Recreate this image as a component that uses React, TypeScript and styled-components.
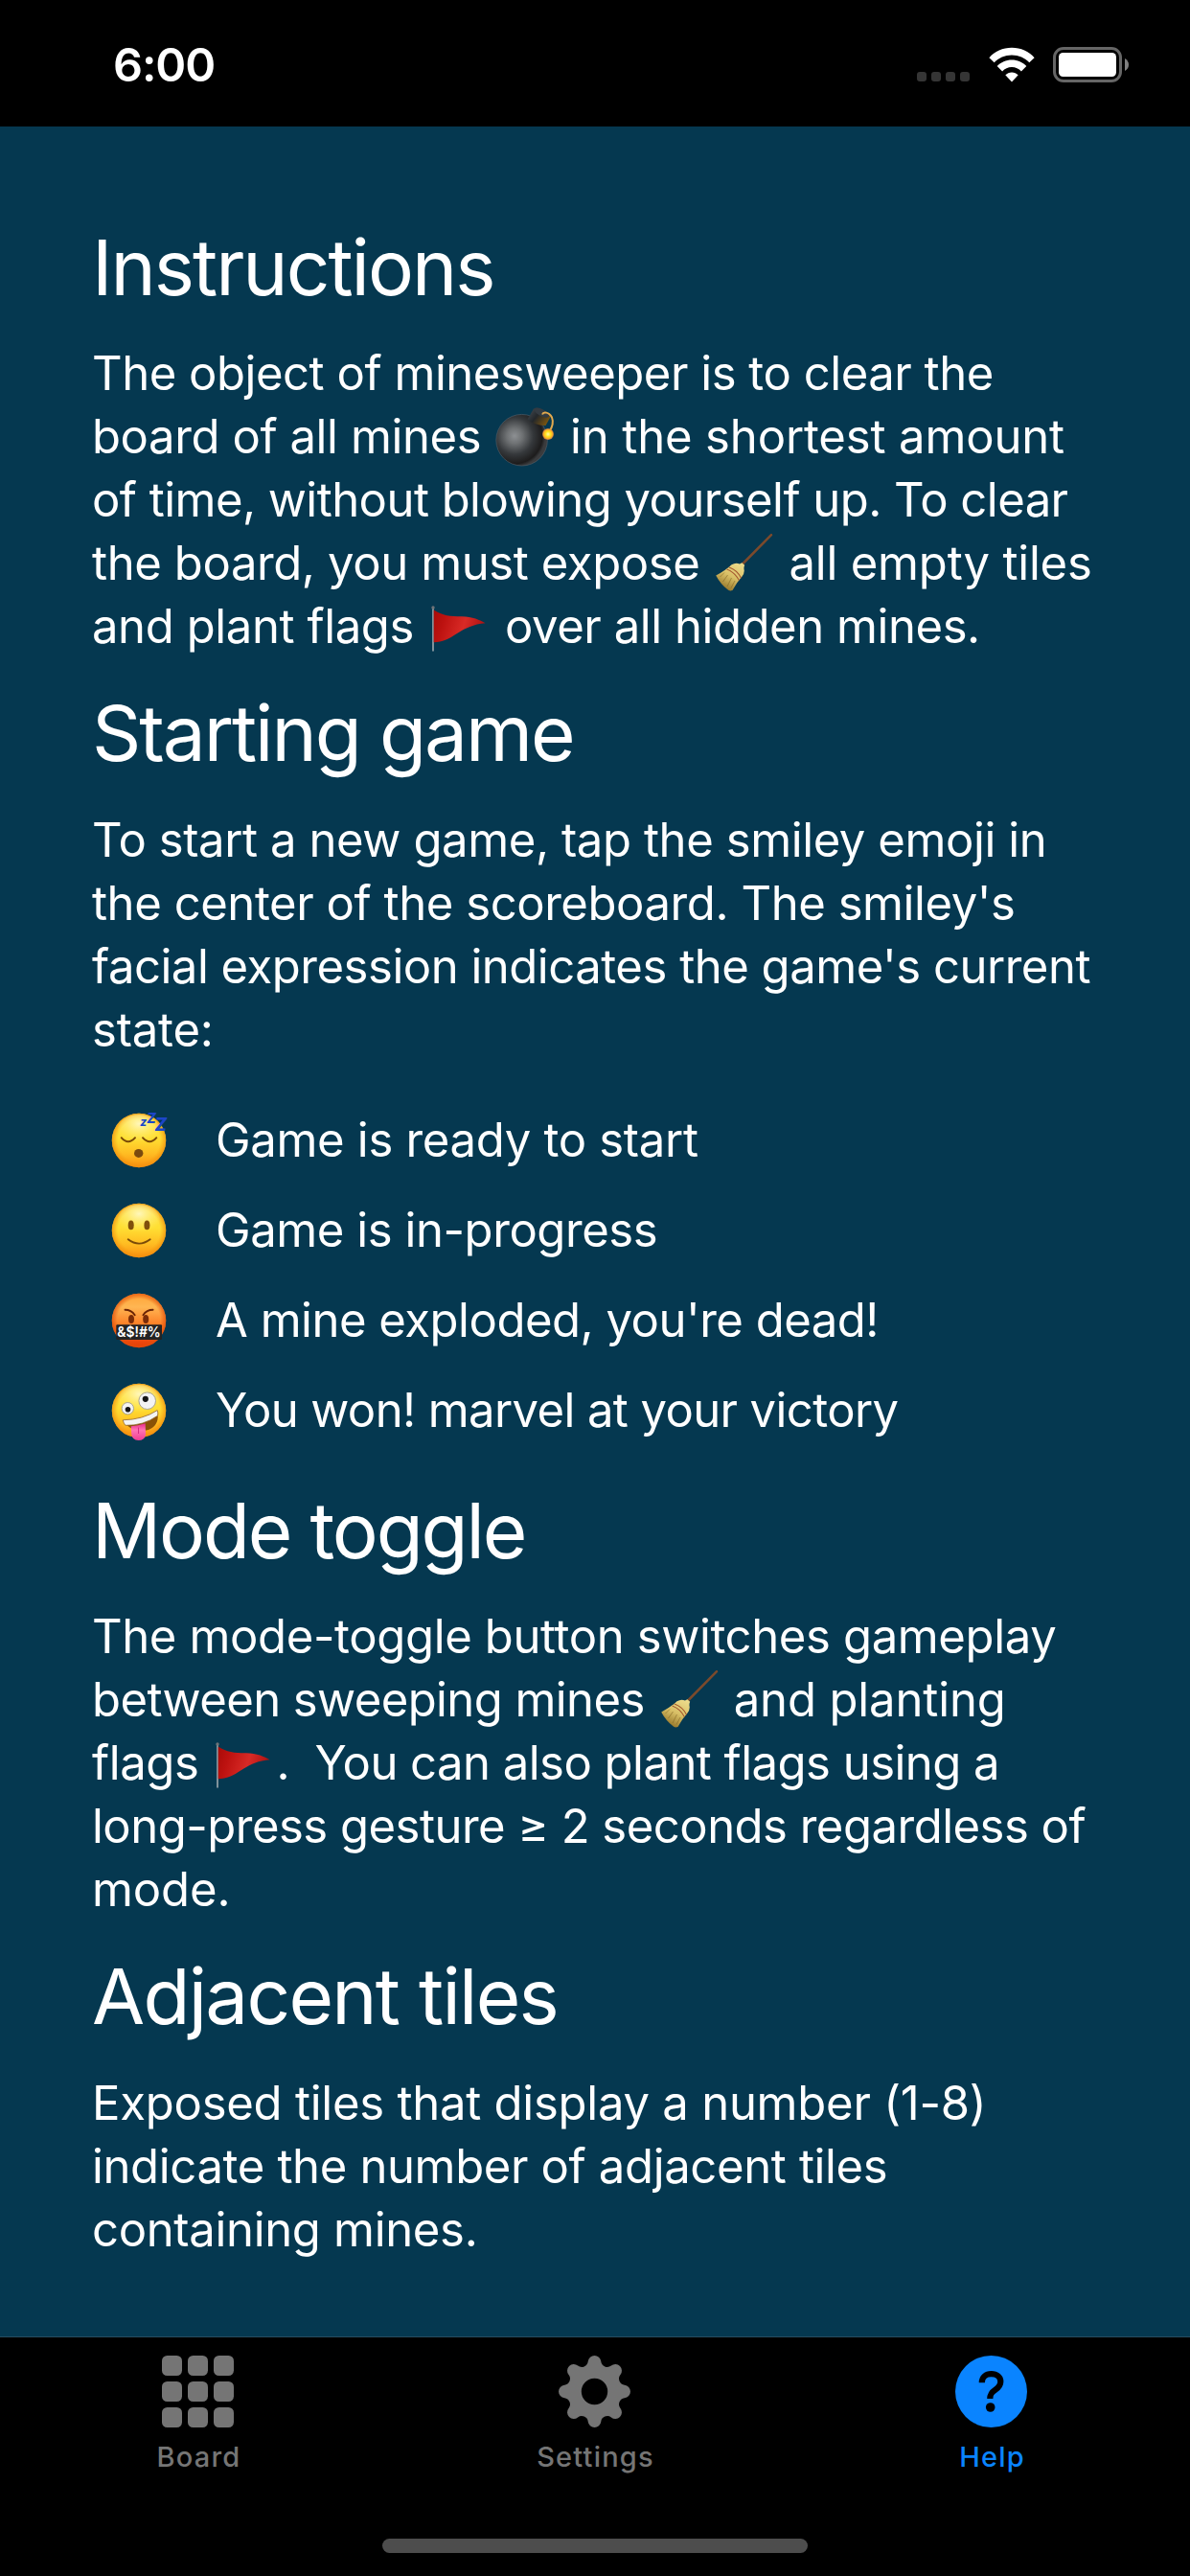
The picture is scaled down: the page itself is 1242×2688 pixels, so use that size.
import React from 'react';
import styled, { createGlobalStyle } from 'styled-components';

const GlobalStyle = createGlobalStyle`
  body {
    margin: 0;
    background: #000;
  }
  * {
    box-sizing: border-box;
  }
`;

const Screen = styled.div`
  display: flex;
  flex-direction: column;
  width: 1242px;
  height: 2688px;
  overflow: hidden;
  background: #000;
  color: #fff;
  font-family: Inter, 'Liberation Sans', sans-serif;
`;

const StatusBar = styled.header`
  flex: none;
  display: flex;
  align-items: flex-start;
  justify-content: space-between;
  height: 132px;
  padding: 38px 63px 0 118px;
`;

const Clock = styled.time`
  font-size: 48.5px;
  font-weight: 600;
  line-height: 60px;
  letter-spacing: -1.1px;
`;

const StatusIcons = styled.div`
  display: flex;
  align-items: flex-end;
  height: 49px;
`;

const SignalDots = styled.div`
  display: flex;
  gap: 5px;
  margin: 0 20px 2px 0;
`;

const SignalDot = styled.i`
  width: 10px;
  height: 10px;
  border-radius: 3px;
  background: #353535;
`;

const WifiIcon = styled.svg`
  display: block;
  width: 48px;
  height: 37px;
  margin-right: 19px;
  margin-bottom: 1px;
`;

const BatteryIcon = styled.svg`
  display: block;
  width: 80px;
  height: 38px;
`;

const Content = styled.main`
  flex: none;
  height: 2307px;
  padding: 97px 0 0 96px;
  background: #053850;
  border-bottom: 1px solid #274c60;
`;

const Heading = styled.h2<{ $tracking: number }>`
  margin: 0 0 28.4px;
  font-size: 80px;
  font-weight: 400;
  line-height: 100px;
  letter-spacing: ${(p) => p.$tracking}px;
  white-space: nowrap;
`;

const Section = styled.section`
  margin-bottom: 27.8px;
`;

const Paragraph = styled.div`
  display: flex;
  flex-direction: column;
`;

const Line = styled.div`
  display: flex;
  height: 66px;
`;

const Words = styled.span<{ $tracking: number }>`
  font-size: 49px;
  line-height: 66px;
  letter-spacing: ${(p) => p.$tracking}px;
  white-space: pre;
`;

const InlineEmoji = styled.svg<{ $width?: number }>`
  flex: none;
  width: ${(p) => p.$width ?? 93}px;
  height: 66px;
  overflow: visible;
`;

const StateList = styled.ul`
  margin: 35px 0 28.5px;
  padding: 0 0 0 19px;
  list-style: none;
`;

const StateRow = styled.li`
  display: flex;
  align-items: center;
  gap: 50px;
  height: 94px;
`;

const Face = styled.svg`
  flex: none;
  width: 60px;
  height: 60px;
  overflow: visible;
`;

const TabBar = styled.nav`
  display: grid;
  grid-template-columns: repeat(3, 414px);
  height: 210px;
  padding-top: 19px;
`;

const Tab = styled.a<{ $active?: boolean }>`
  display: flex;
  flex-direction: column;
  align-items: center;
  color: ${(p) => (p.$active ? '#0a84ff' : '#757575')};
`;

const TabIcon = styled.svg`
  width: 75px;
  height: 75px;
  margin-right: 1px;
`;

const TabLabel = styled.span`
  margin-top: 13px;
  padding-left: 1px;
  font-size: 29px;
  font-weight: 500;
  line-height: 36px;
  letter-spacing: 1.2px;
`;

const HomeIndicator = styled.div`
  width: 444px;
  height: 15px;
  margin: 0 auto;
  border-radius: 8px;
  background: #4d4d4d;
`;

const Gradients = styled.svg`
  display: block;
  width: 0;
  height: 0;
`;

function GradientDefs() {
  return (
    <Gradients aria-hidden="true">
      <defs>
        <linearGradient id="face" x1="0" y1="0" x2="0" y2="1">
          <stop offset="0" stopColor="#ffe04a" />
          <stop offset="0.45" stopColor="#ffdf33" />
          <stop offset="0.75" stopColor="#ffbc22" />
          <stop offset="1" stopColor="#fb8f10" />
        </linearGradient>
        <radialGradient id="faceEdge" cx="0.5" cy="0.5" r="0.5">
          <stop offset="0.78" stopColor="#f59a10" stopOpacity="0" />
          <stop offset="1" stopColor="#f08c0c" stopOpacity="0.75" />
        </radialGradient>
        <radialGradient id="shine" cx="0.5" cy="0.3" r="0.6">
          <stop offset="0" stopColor="#fffbd0" stopOpacity="0.85" />
          <stop offset="1" stopColor="#fff27a" stopOpacity="0" />
        </radialGradient>
        <linearGradient id="angry" x1="0" y1="0" x2="0" y2="1">
          <stop offset="0" stopColor="#ffa436" />
          <stop offset="0.25" stopColor="#ffb653" />
          <stop offset="0.6" stopColor="#fd7a22" />
          <stop offset="1" stopColor="#e63405" />
        </linearGradient>
        <radialGradient id="angryEdge" cx="0.5" cy="0.5" r="0.5">
          <stop offset="0.8" stopColor="#e2500a" stopOpacity="0" />
          <stop offset="1" stopColor="#e2500a" stopOpacity="0.75" />
        </radialGradient>
        <radialGradient id="bomb" cx="0.36" cy="0.42" r="0.6">
          <stop offset="0" stopColor="#8d9093" />
          <stop offset="0.25" stopColor="#6f7274" />
          <stop offset="0.6" stopColor="#35383b" />
          <stop offset="0.9" stopColor="#1d1c1c" />
          <stop offset="1" stopColor="#3a3b3d" />
        </radialGradient>
        <linearGradient id="bombCap" x1="0" y1="0" x2="1" y2="0.6">
          <stop offset="0" stopColor="#4a5158" />
          <stop offset="0.5" stopColor="#23272b" />
          <stop offset="1" stopColor="#7a5410" />
        </linearGradient>
        <radialGradient id="spark">
          <stop offset="0" stopColor="#fffbb0" />
          <stop offset="0.45" stopColor="#ffe21c" />
          <stop offset="0.8" stopColor="#f7a62a" />
          <stop offset="1" stopColor="#d9824a" stopOpacity="0.7" />
        </radialGradient>
        <linearGradient id="straw" x1="0.8" y1="0" x2="0.3" y2="1">
          <stop offset="0" stopColor="#eddc8c" />
          <stop offset="0.5" stopColor="#d8bf66" />
          <stop offset="1" stopColor="#8f6f24" />
        </linearGradient>
        <linearGradient id="flag" x1="0" y1="0" x2="1" y2="0.2">
          <stop offset="0" stopColor="#a90b08" />
          <stop offset="0.25" stopColor="#bd1210" />
          <stop offset="0.65" stopColor="#d92a26" />
          <stop offset="1" stopColor="#b01414" />
        </linearGradient>
        <linearGradient id="tongue" x1="0" y1="0" x2="0" y2="1">
          <stop offset="0" stopColor="#e8288a" />
          <stop offset="0.4" stopColor="#ff74b4" />
          <stop offset="1" stopColor="#f03c92" />
        </linearGradient>
      </defs>
    </Gradients>
  );
}

function Bomb() {
  return (
    <InlineEmoji viewBox="0 0 93 66">
      <circle cx="42.6" cy="36.2" r="26.8" fill="url(#bomb)" stroke="#55606a" strokeWidth="0.6" />
      <path d="M48.5 14.5 55 3.6Q57 2.2 60 3L70.5 8.3Q73.4 10 72.3 12.5L67.5 21Q57 21.5 48.5 14.5Z" fill="url(#bombCap)" />
      <ellipse cx="63.3" cy="7.6" rx="8.6" ry="3.6" transform="rotate(27 63.3 7.6)" fill="#343b42" />
      <path d="M64 9.5C65 6.500 71 6.500 74 12.500C75.800 17 75 22 71 28" fill="none" stroke="#e2a94f" strokeWidth="2" />
      <circle cx="70" cy="30" r="6" fill="url(#spark)" />
    </InlineEmoji>
  );
}

function Broom() {
  return (
    <InlineEmoji viewBox="0 0 93 66">
      <path d="M75 3.200 45 33.500" stroke="#7b4a2c" strokeWidth="2.500" strokeLinecap="round" />
      <path
        d="M44.300 32.200 47.200 34.800Q46 37 46.700 40Q47 43 44.500 46.500Q39 52.500 34.500 61Q31 62.300 29.200 60Q22 54.500 17.200 45.500Q27.500 40 33.500 34.200Q38 31.500 42 33.500Z"
        fill="url(#straw)"
      />
      <path d="M28.600 39Q37 42 41.300 50.500M30.800 37Q39.500 40 43.500 48.200" fill="none" stroke="#a4572f" strokeWidth="1.100" />
      <path d="M26 42.500 21.500 47M29.500 45 24.500 52M33.500 48 29 57M37 51 33 58.500" stroke="#7d611f" strokeOpacity="0.600" strokeWidth="0.900" />
    </InlineEmoji>
  );
}

function Flag({ width }: { width?: number }) {
  return (
    <InlineEmoji $width={width} viewBox={`0 0 ${width ?? 93} 66`}>
      <path d="M20 13V58.500" stroke="#aab0b4" strokeWidth="1.500" />
      <circle cx="20" cy="13" r="1.700" fill="#6f7378" />
      <path
        d="M20.700 15.500C30 21.500 38 22.300 50 22.300C61 22.500 69 26 74.500 29.300C62 30.300 54 34.500 45 40C36 46 30 49.200 20.700 49.200Z"
        fill="url(#flag)"
      />
    </InlineEmoji>
  );
}

function YellowHead() {
  return (
    <>
      <circle cx="30" cy="30" r="28.200" fill="url(#face)" />
      <circle cx="30" cy="30" r="28.200" fill="url(#faceEdge)" />
      <ellipse cx="30" cy="19" rx="22" ry="16" fill="url(#shine)" />
    </>
  );
}

const Snore = styled.text`
  fill: #1c46c8;
  font-family: Inter, sans-serif;
  font-weight: 800;
  font-style: italic;
`;

const Curse = styled.text`
  fill: #fff;
  font-family: Inter, sans-serif;
  font-size: 14.5px;
  font-weight: 600;
  text-anchor: middle;
`;

function SleepingFace() {
  return (
    <Face viewBox="0 0 60 60">
      <YellowHead />
      <path d="M11.700 27.200Q18.800 35.400 26 27.200M34 27.200Q41.200 35.400 48.300 27.200" fill="none" stroke="#7a4a08" strokeWidth="2" strokeLinecap="round" />
      <ellipse cx="29.700" cy="43.400" rx="4.700" ry="4.500" fill="#7a4a0e" />
      <Snore x="31.300" y="15.200" fontSize="12">z</Snore>
      <Snore x="38.300" y="11.700" fontSize="14">Z</Snore>
      <Snore x="46.500" y="19.700" fontSize="18.500">Z</Snore>
    </Face>
  );
}

function SmilingFace() {
  return (
    <Face viewBox="0 0 60 60">
      <YellowHead />
      <ellipse cx="21.700" cy="24.400" rx="3" ry="4.900" fill="#80500c" />
      <ellipse cx="38.400" cy="24.400" rx="3" ry="4.900" fill="#80500c" />
      <path d="M18.700 39.300Q30 48 41.700 39.300" fill="none" stroke="#7a4a08" strokeWidth="1.900" strokeLinecap="round" />
    </Face>
  );
}

function CursingFace() {
  return (
    <Face viewBox="0 0 60 60">
      <circle cx="30" cy="30" r="28.200" fill="url(#angry)" />
      <circle cx="30" cy="30" r="28.200" fill="url(#angryEdge)" />
      <ellipse cx="22" cy="28.400" rx="3" ry="4.500" fill="#7a2c08" />
      <ellipse cx="37.200" cy="28.400" rx="3" ry="4.500" fill="#7a2c08" />
      <path d="M15.500 18.800Q22 18.800 25.700 24.200M44.600 18.800Q38 18.800 34.400 24.200" fill="none" stroke="#6a2406" strokeWidth="1.900" strokeLinecap="round" />
      <rect x="6.300" y="34.300" width="47.700" height="15.700" rx="1" fill="#232323" />
      <Curse x="30" y="47.300" textLength="45.500" lengthAdjust="spacingAndGlyphs">&amp;$!#%</Curse>
    </Face>
  );
}

function ZanyFace() {
  return (
    <Face viewBox="0 0 60 60">
      <YellowHead />
      <circle cx="38.700" cy="19.700" r="8.800" fill="#f3f3f3" stroke="#a9a390" strokeWidth="1" />
      <circle cx="36.800" cy="17.800" r="3.100" fill="#161616" />
      <circle cx="18.300" cy="27.700" r="6.200" fill="#f3f3f3" stroke="#a9a390" strokeWidth="1" />
      <circle cx="18.500" cy="28.800" r="2.800" fill="#161616" />
      <path d="M13.300 40Q34 39.500 49 29.800Q52.500 45 40 50Q22 54 13.300 40Z" fill="#8a5206" />
      <path d="M13.200 39.800Q34 39.500 49.200 29.600Q50.200 32 49.700 35.200Q34 46 15.800 45.300Q14 43 13.200 39.800Z" fill="#f4f4f4" stroke="#8a5a20" strokeWidth="0.700" />
      <path d="M21.800 46.200Q29 45.500 36.700 43.200L37 55Q36 61 29.500 61Q22.600 60.500 22.200 54Z" fill="url(#tongue)" />
      <path d="M29.500 47.500V54" stroke="#d42a80" strokeWidth="1" />
    </Face>
  );
}

/* Eight round teeth joined by round valleys, centred on the origin. */
function gearOutline() {
  const step = Math.PI / 4;
  const at = (x: number, y: number, a: number) =>
    `${(x * Math.cos(a) - y * Math.sin(a)).toFixed(2)} ${(x * Math.sin(a) + y * Math.cos(a)).toFixed(2)}`;
  let d = `M${at(31.4, -6.76, 0)}`;
  for (let i = 0; i < 8; i += 1) {
    d += `A6.8 6.8 0 0 1 ${at(31.4, 6.76, i * step)}`;
    d += `A6.6 6.6 0 0 0 ${at(31.4, -6.76, (i + 1) * step)}`;
  }
  return `${d}ZM13.700 0A13.700 13.700 0 1 0 -13.700 0A13.700 13.700 0 1 0 13.700 0Z`;
}

function BoardIcon() {
  const cells = [0, 27, 54];
  return (
    <TabIcon viewBox="0 0 75 75" fill="currentColor">
      {cells.map((y) => cells.map((x) => <rect key={`${x}-${y}`} x={x} y={y} width="21" height="21" rx="5.500" />))}
    </TabIcon>
  );
}

function SettingsIcon() {
  return (
    <TabIcon viewBox="-37.500 -37.500 75 75" fill="currentColor">
      <path fillRule="evenodd" d={gearOutline()} />
    </TabIcon>
  );
}

function HelpIcon() {
  return (
    <TabIcon viewBox="0 0 75 75">
      <circle cx="37.500" cy="37.500" r="37.500" fill="currentColor" />
      <path
        d="M27.800 28.200C27.800 22.500 32 19.200 37.600 19.200C43.500 19.200 47.300 22.500 47.300 27.200C47.300 31.500 45 33.600 41.600 35.800C37.800 38.300 36.300 40.200 36.300 45"
        fill="none"
        stroke="#000"
        strokeWidth="6.200"
      />
      <circle cx="36.700" cy="54" r="4.800" fill="#000" />
    </TabIcon>
  );
}

const states = [
  { face: <SleepingFace />, text: 'Game is ready to start', tracking: -0.3 },
  { face: <SmilingFace />, text: 'Game is in-progress', tracking: -0.42 },
  { face: <CursingFace />, text: "A mine exploded, you're dead!", tracking: -0.48 },
  { face: <ZanyFace />, text: 'You won! marvel at your victory', tracking: -0.6 },
];

export default function App() {
  return (
    <Screen>
      <GlobalStyle />
      <StatusBar>
        <Clock>6:00</Clock>
        <StatusIcons>
          <SignalDots>
            <SignalDot />
            <SignalDot />
            <SignalDot />
            <SignalDot />
          </SignalDots>
          <WifiIcon viewBox="0 0 48 37" fill="#fff">
            <path d="M24 0.800C33.500 0.800 41.800 4.700 47.600 11.200L42.300 16.300C37.700 11.300 31.200 8.400 24 8.400C16.800 8.400 10.300 11.300 5.700 16.300L0.400 11.200C6.200 4.700 14.500 0.800 24 0.800Z" />
            <path d="M24 13.600C30 13.600 35.400 16 39.300 20.100L33.900 25.400C31.400 22.700 27.900 21.100 24 21.100C20.100 21.100 16.600 22.700 14.100 25.400L8.700 20.100C12.600 16 18 13.600 24 13.600Z" />
            <path d="M24 26.400C26.600 26.400 28.900 27.400 30.700 29.300L24 36.500L17.300 29.300C19.100 27.400 21.400 26.400 24 26.400Z" />
          </WifiIcon>
          <BatteryIcon viewBox="0 0 80 38">
            <rect x="1.500" y="1.500" width="69" height="34" rx="9.500" fill="none" stroke="#666" strokeWidth="3" />
            <rect x="6" y="6" width="60" height="25" rx="4.500" fill="#fff" />
            <path d="M75 12Q79 14.500 79 18.500Q79 22.500 75 25Z" fill="#808080" />
          </BatteryIcon>
        </StatusIcons>
      </StatusBar>

      <Content>
        <GradientDefs />
        <Section>
          <Heading $tracking={-1.98}>Instructions</Heading>
          <Paragraph>
            <Line><Words $tracking={-0.46}>The object of minesweeper is to clear the</Words></Line>
            <Line>
              <Words $tracking={-0.4}>board of all mines</Words>
              <Bomb />
              <Words $tracking={-0.14}>in the shortest amount</Words>
            </Line>
            <Line><Words $tracking={-0.535}>of time, without blowing yourself up. To clear</Words></Line>
            <Line>
              <Words $tracking={-0.39}>the board, you must expose</Words>
              <Broom />
              <Words $tracking={-0.19}>all empty tiles</Words>
            </Line>
            <Line>
              <Words $tracking={-0.39}>and plant flags</Words>
              <Flag width={95} />
              <Words $tracking={-0.43}>over all hidden mines.</Words>
            </Line>
          </Paragraph>
        </Section>

        <Section>
          <Heading $tracking={-2.05}>Starting game</Heading>
          <Paragraph>
            <Line><Words $tracking={-0.4}>To start a new game, tap the smiley emoji in</Words></Line>
            <Line><Words $tracking={-0.426}>the center of the scoreboard. The smiley's</Words></Line>
            <Line><Words $tracking={-0.476}>facial expression indicates the game's current</Words></Line>
            <Line><Words $tracking={-0.2}>state:</Words></Line>
          </Paragraph>
          <StateList>
            {states.map((s) => (
              <StateRow key={s.text}>
                {s.face}
                <Words $tracking={s.tracking}>{s.text}</Words>
              </StateRow>
            ))}
          </StateList>
        </Section>

        <Section>
          <Heading $tracking={-2.15}>Mode toggle</Heading>
          <Paragraph>
            <Line><Words $tracking={-0.365}>The mode-toggle button switches gameplay</Words></Line>
            <Line>
              <Words $tracking={-0.58}>between sweeping mines</Words>
              <Broom />
              <Words $tracking={-0.12}>and planting</Words>
            </Line>
            <Line>
              <Words $tracking={-0.4}>flags</Words>
              <Flag width={81} />
              <Words $tracking={-0.52}>{'.  You can also plant flags using a'}</Words>
            </Line>
            <Line><Words $tracking={-0.5}>long-press gesture ≥ 2 seconds regardless of</Words></Line>
            <Line><Words $tracking={-0.1}>mode.</Words></Line>
          </Paragraph>
        </Section>

        <Section>
          <Heading $tracking={-1.75}>Adjacent tiles</Heading>
          <Paragraph>
            <Line><Words $tracking={-0.24}>Exposed tiles that display a number (1-8)</Words></Line>
            <Line><Words $tracking={-0.35}>indicate the number of adjacent tiles</Words></Line>
            <Line><Words $tracking={-0.32}>containing mines.</Words></Line>
          </Paragraph>
        </Section>
      </Content>

      <TabBar>
        <Tab>
          <BoardIcon />
          <TabLabel>Board</TabLabel>
        </Tab>
        <Tab>
          <SettingsIcon />
          <TabLabel>Settings</TabLabel>
        </Tab>
        <Tab $active>
          <HelpIcon />
          <TabLabel>Help</TabLabel>
        </Tab>
      </TabBar>
      <HomeIndicator />
    </Screen>
  );
}
